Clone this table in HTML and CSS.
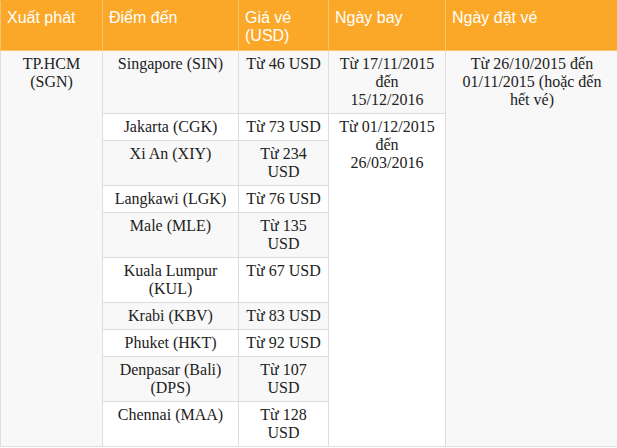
FILE: index.html
```html
<!DOCTYPE html>
<html>
<head>
<meta charset="utf-8">
<link rel="stylesheet" href="styles.css">
</head>
<body>
<table class="fares">
  <colgroup>
    <col class="c1"><col class="c2"><col class="c3"><col class="c4"><col class="c5">
  </colgroup>
  <thead>
    <tr>
      <th>Xuất phát</th>
      <th>Điểm đến</th>
      <th>Giá vé<br>(USD)</th>
      <th>Ngày bay</th>
      <th>Ngày đặt vé</th>
    </tr>
  </thead>
  <tbody>
    <tr class="odd">
      <td rowspan="10">TP.HCM<br>(SGN)</td>
      <td>Singapore (SIN)</td>
      <td>Từ 46 USD</td>
      <td>Từ 17/11/2015<br>đến<br>15/12/2016</td>
      <td rowspan="10">Từ 26/10/2015 đến<br>01/11/2015 (hoặc đến<br>hết vé)</td>
    </tr>
    <tr class="even">
      <td>Jakarta (CGK)</td>
      <td>Từ 73 USD</td>
      <td rowspan="9">Từ 01/12/2015<br>đến<br>26/03/2016</td>
    </tr>
    <tr class="odd"><td>Xi An (XIY)</td><td>Từ 234<br>USD</td></tr>
    <tr class="even"><td>Langkawi (LGK)</td><td>Từ 76 USD</td></tr>
    <tr class="odd"><td>Male (MLE)</td><td>Từ 135<br>USD</td></tr>
    <tr class="even"><td>Kuala Lumpur<br>(KUL)</td><td>Từ 67 USD</td></tr>
    <tr class="odd"><td>Krabi (KBV)</td><td>Từ 83 USD</td></tr>
    <tr class="even"><td>Phuket (HKT)</td><td>Từ 92 USD</td></tr>
    <tr class="odd"><td>Denpasar (Bali)<br>(DPS)</td><td>Từ 107<br>USD</td></tr>
    <tr class="even"><td>Chennai (MAA)</td><td>Từ 128<br>USD</td></tr>
  </tbody>
</table>
</body>
</html>
```
FILE: styles.css
```css
html, body {
  margin: 0;
  padding: 0;
  background: #ffffff;
}

.fares {
  border-collapse: collapse;
  table-layout: fixed;
  width: 618px;
  font-family: "Liberation Serif", "Times New Roman", serif;
  font-size: 16px;
  line-height: 18px;
  color: #222222;
}

.c1 { width: 102px; }
.c2 { width: 136px; }
.c3 { width: 90px; }
.c4 { width: 117px; }
.c5 { width: 173px; }

.fares th {
  background: #fba829;
  color: #ffffff;
  font-family: "Liberation Sans", Arial, sans-serif;
  font-size: 16px;
  font-weight: normal;
  line-height: 18px;
  text-align: left;
  vertical-align: top;
  padding: 8px 6px 5px 6px;
  border: 1px solid #fcc36e;
  border-top-color: #fba829;
}

.fares td {
  font-family: "Liberation Serif", "Times New Roman", serif;
  font-size: 16px;
  line-height: 18px;
  border: 1px solid #dddddd;
  padding: 4px 5px;
  text-align: center;
  vertical-align: top;
  white-space: nowrap;
}

.fares tr.odd td { background: #f8f8f8; }
.fares tr.even td { background: #ffffff; }
```
